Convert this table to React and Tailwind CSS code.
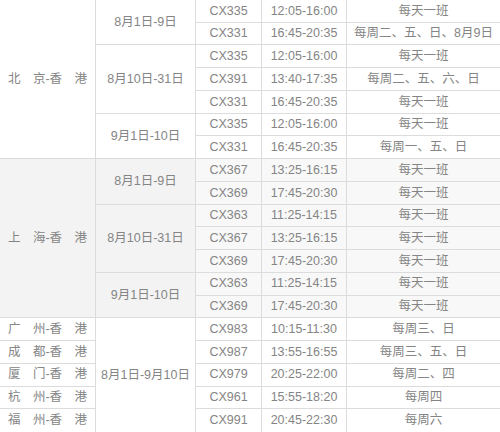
import { Fragment } from 'react';

const sections = [
  {
    route: '北京',
    shade: false,
    groups: [
      { date: '8月1日-9日', flights: [['CX335', '12:05-16:00', '每天一班'], ['CX331', '16:45-20:35', '每周二、五、日、8月9日']] },
      { date: '8月10日-31日', flights: [['CX335', '12:05-16:00', '每天一班'], ['CX391', '13:40-17:35', '每周二、五、六、日'], ['CX331', '16:45-20:35', '每天一班']] },
      { date: '9月1日-10日', flights: [['CX335', '12:05-16:00', '每天一班'], ['CX331', '16:45-20:35', '每周一、五、日']] },
    ],
  },
  {
    route: '上海',
    shade: true,
    groups: [
      { date: '8月1日-9日', flights: [['CX367', '13:25-16:15', '每天一班'], ['CX369', '17:45-20:30', '每天一班']] },
      { date: '8月10日-31日', flights: [['CX363', '11:25-14:15', '每天一班'], ['CX367', '13:25-16:15', '每天一班'], ['CX369', '17:45-20:30', '每天一班']] },
      { date: '9月1日-10日', flights: [['CX363', '11:25-14:15', '每天一班'], ['CX369', '17:45-20:30', '每天一班']] },
    ],
  },
];

const others = [
  ['广州', 'CX983', '10:15-11:30', '每周三、日'],
  ['成都', 'CX987', '13:55-16:55', '每周三、五、日'],
  ['厦门', 'CX979', '20:25-22:00', '每周二、四'],
  ['杭州', 'CX961', '15:55-18:20', '每周四'],
  ['福州', 'CX991', '20:45-22:30', '每周六'],
];

const cell = 'flex items-center justify-center border-[#dcdcdc]';

const Route = ({ name, className }) => (
  <div className={`flex items-center justify-between px-2 border-r border-b border-[#dcdcdc] ${className}`}>
    <span>{name[0]}</span>
    <span>{name[1]}-香</span>
    <span>港</span>
  </div>
);

const FlightRow = ({ f, last, shade }) => (
  <>
    <div className={`${cell} border-r ${last ? '' : 'border-b'} ${shade ? 'bg-[#f8f8f8]' : ''}`}>{f[0]}</div>
    <div className={`${cell} border-r ${last ? '' : 'border-b'} ${shade ? 'bg-[#f8f8f8]' : ''}`}>{f[1]}</div>
    <div className={`${cell} ${last ? '' : 'border-b'} ${shade ? 'bg-[#f8f8f8]' : ''}`}>{f[2]}</div>
  </>
);

export default function App() {
  return (
    <div
      className="w-[500px] h-[432px] bg-white text-[#858585] text-[12.5px] leading-none overflow-hidden"
      style={{ fontFamily: '"Liberation Sans", "Noto Sans CJK SC", sans-serif' }}
    >
      <div className="grid h-full grid-cols-[96px_100px_66px_85px_1fr] grid-rows-[repeat(19,minmax(0,1fr))]">
        {sections.map((s) => (
          <Fragment key={s.route}>
            <Route name={s.route} className={`row-span-7 ${s.shade ? 'bg-[#f3f3f3]' : ''}`} />
            {s.groups.map((g) => (
              <Fragment key={g.date}>
                <div
                  className={`${cell} border-r border-b ${g.flights.length === 3 ? 'row-span-3' : 'row-span-2'} ${s.shade ? 'bg-[#f3f3f3]' : ''}`}
                >
                  {g.date}
                </div>
                {g.flights.map((f, i) => (
                  <FlightRow key={i} f={f} shade={s.shade} />
                ))}
              </Fragment>
            ))}
          </Fragment>
        ))}
        {others.map((o, i) => (
          <Fragment key={o[0]}>
            <Route name={o[0]} className={i === others.length - 1 ? 'border-b-0' : ''} />
            {i === 0 && <div className={`${cell} border-r row-span-5`}>8月1日-9月10日</div>}
            <FlightRow f={o.slice(1)} last={i === others.length - 1} />
          </Fragment>
        ))}
      </div>
    </div>
  );
}
